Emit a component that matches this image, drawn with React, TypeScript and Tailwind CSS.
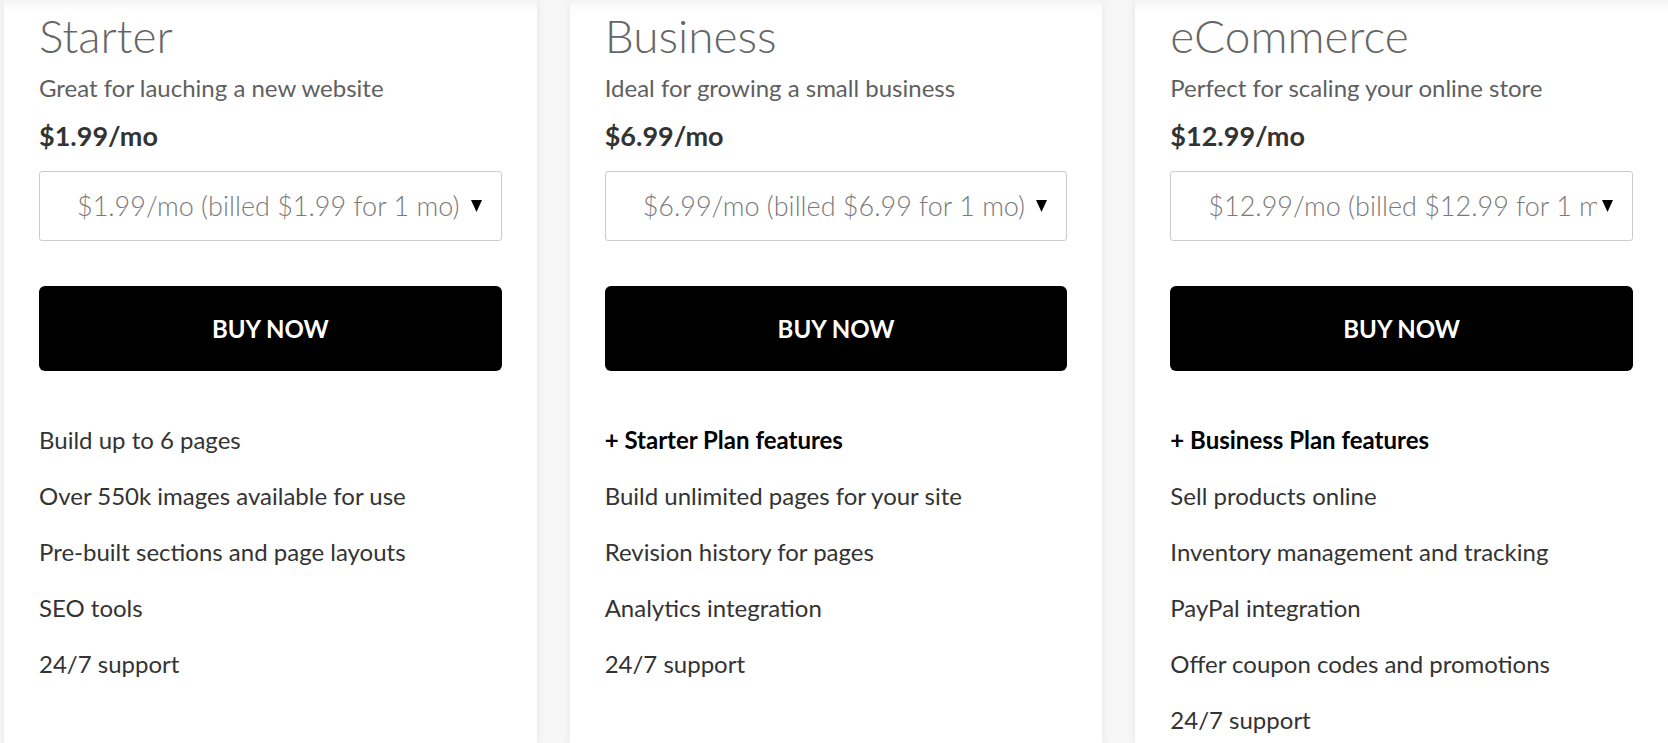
import React from 'react';

interface Plan {
  name: string;
  tagline: string;
  price: string;
  option: string;
  baseFeature?: string;
  features: string[];
}

const plans: Plan[] = [
  {
    name: 'Starter',
    tagline: 'Great for lauching a new website',
    price: '$1.99/mo',
    option: '$1.99/mo (billed $1.99 for 1 mo)',
    features: [
      'Build up to 6 pages',
      'Over 550k images available for use',
      'Pre-built sections and page layouts',
      'SEO tools',
      '24/7 support',
    ],
  },
  {
    name: 'Business',
    tagline: 'Ideal for growing a small business',
    price: '$6.99/mo',
    option: '$6.99/mo (billed $6.99 for 1 mo)',
    baseFeature: '+ Starter Plan features',
    features: [
      'Build unlimited pages for your site',
      'Revision history for pages',
      'Analytics integration',
      '24/7 support',
    ],
  },
  {
    name: 'eCommerce',
    tagline: 'Perfect for scaling your online store',
    price: '$12.99/mo',
    option: '$12.99/mo (billed $12.99 for 1 mo)',
    baseFeature: '+ Business Plan features',
    features: [
      'Sell products online',
      'Inventory management and tracking',
      'PayPal integration',
      'Offer coupon codes and promotions',
      '24/7 support',
    ],
  },
];

function PlanCard({ plan }: { plan: Plan }) {
  return (
    <div className="flex-1 min-w-0 bg-white px-[35px] pt-[8px] shadow-[0_0_10px_rgba(0,0,0,0.07),inset_0_14px_10px_-10px_rgba(0,0,0,0.06)]">
      <h2 className="text-[46px] leading-[56px] font-light text-[#666]">{plan.name}</h2>
      <p className="mt-[9px] text-[24px] leading-[30px] text-[#5f5f5f]">{plan.tagline}</p>
      <p className="mt-[17px] text-[27px] leading-[32px] font-bold text-[#333]">{plan.price}</p>

      {/* billing period picker, styled like the native select */}
      <div className="relative mt-[19px] flex h-[70px] items-center rounded-[3px] border border-[#ccc] pl-[37px] pr-[35px]">
        <span className="overflow-hidden whitespace-nowrap text-[27px] font-light text-[#7a7a7a]">
          {plan.option}
        </span>
        <svg
          className="absolute right-[19px] top-1/2 -translate-y-1/2"
          width="11"
          height="12"
          viewBox="0 0 11 12"
        >
          <polygon points="0,0 11,0 5.5,12" fill="#000" />
        </svg>
      </div>

      <button className="mt-[45px] flex h-[85px] w-full items-center justify-center rounded-[6px] bg-black text-[24px] font-bold text-white">
        BUY NOW
      </button>

      <ul className="mt-[41px]">
        {plan.baseFeature && (
          <li className="text-[24px] leading-[56px] font-bold text-black">{plan.baseFeature}</li>
        )}
        {plan.features.map((f) => (
          <li key={f} className="text-[24px] leading-[56px] text-[#333]">
            {f}
          </li>
        ))}
      </ul>
    </div>
  );
}

export default function App() {
  return (
    <div className="h-[743px] overflow-hidden bg-[#f7f7f7] font-[Lato,sans-serif]">
      <div className="flex h-full gap-[33px] pl-[4px]">
        {plans.map((p) => (
          <PlanCard key={p.name} plan={p} />
        ))}
      </div>
    </div>
  );
}
